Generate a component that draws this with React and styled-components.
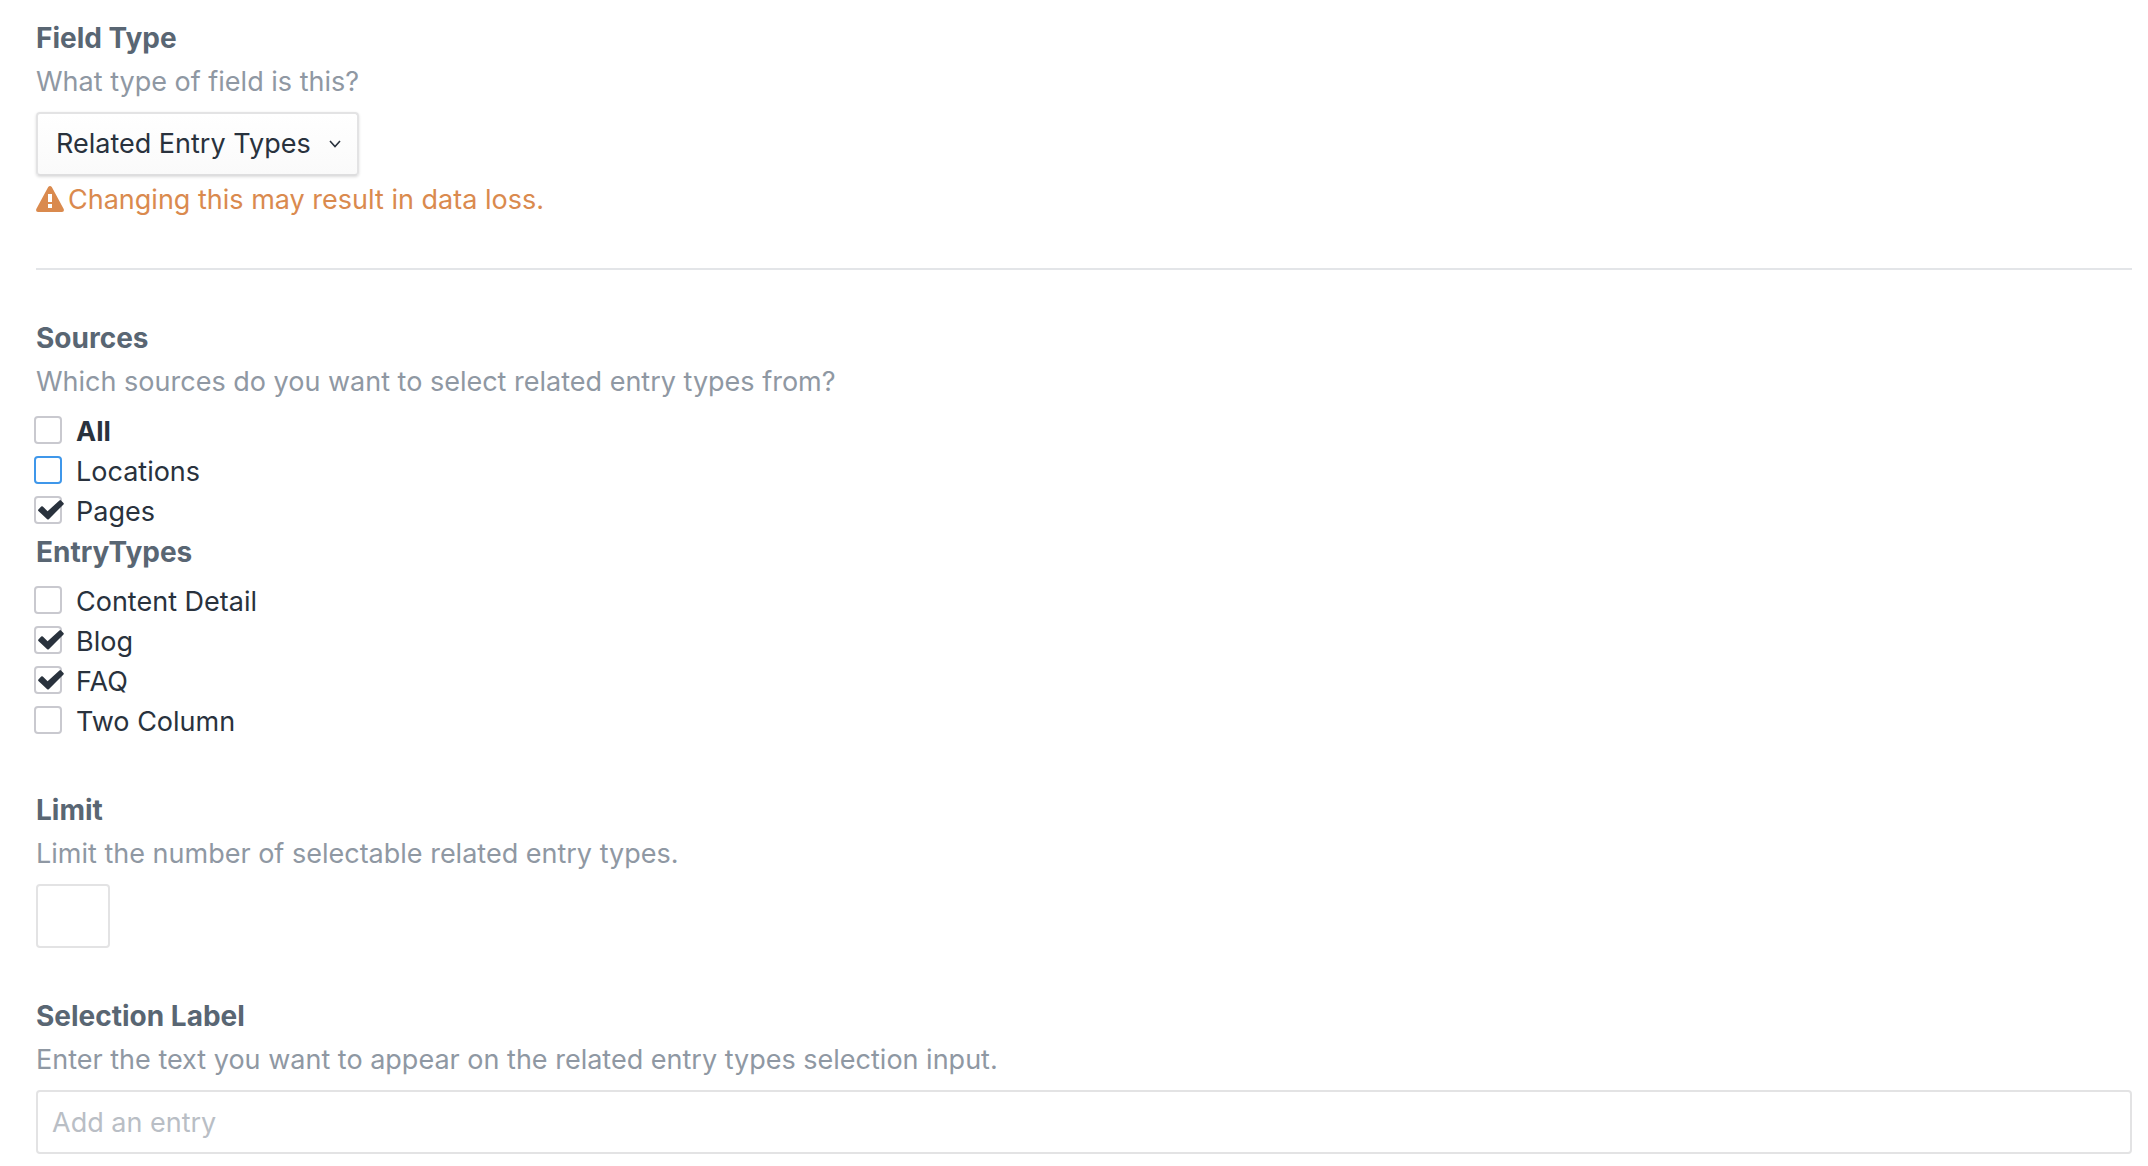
import React, { useState } from 'react';
import styled, { createGlobalStyle } from 'styled-components';

const GlobalStyle = createGlobalStyle`
  *, *::before, *::after { box-sizing: border-box; }
  body {
    margin: 0;
    background: #fff;
    color: #29323d;
    font-family: Inter, "Liberation Sans", sans-serif;
    font-size: 27px;
    line-height: 40px;
  }
  input, select { font: inherit; color: inherit; margin: 0; }
`;

const Form = styled.form`
  display: flex;
  flex-direction: column;
  gap: 48px;
  padding: 18px 16px 12px 36px;
`;

const Field = styled.div`
  display: flex;
  flex-direction: column;
  align-items: flex-start;
`;

const CheckGroup = styled.fieldset`
  display: flex;
  flex-direction: column;
  align-items: flex-start;
  min-width: 0;
  margin: 0;
  padding: 0;
  border: 0;
`;

const Heading = styled.label`
  font-size: 28px;
  font-weight: 700;
  color: #596673;
`;

const Legend = styled.legend`
  padding: 0;
  font-size: 28px;
  font-weight: 700;
  color: #596673;
`;

const Hint = styled.p`
  margin: 4px 0 10px;
  color: #8f98a3;
`;

const SelectBox = styled.div`
  position: relative;
  color: #29323d;
`;

const Select = styled.select`
  appearance: none;
  display: block;
  height: 64px;
  padding: 0 46px 0 18px;
  border: 2px solid #e3e3e4;
  border-bottom-color: #dededf;
  border-radius: 4px;
  background: linear-gradient(#fff, #fafafa);
  box-shadow: 0 1px 3px rgba(0, 0, 0, 0.14);
`;

const Chevron = styled.svg`
  position: absolute;
  top: 28px;
  right: 18px;
  pointer-events: none;
`;

const Warning = styled.p`
  display: flex;
  align-items: center;
  gap: 4px;
  margin: 4px 0 0;
  color: #da8a4e;
`;

const Divider = styled.hr`
  width: 100%;
  height: 2px;
  margin: 0;
  border: 0;
  background: #e3e5e8;
`;

const CheckList = styled.div`
  display: flex;
  flex-direction: column;
  margin-left: -2px;
`;

const CheckRow = styled.label`
  display: flex;
  gap: 14px;
  font-weight: ${(p) => (p.$strong ? 700 : 400)};
`;

const CheckBox = styled.span`
  display: grid;
  width: 28px;
  height: 28px;
  margin-top: 4px;

  > * { grid-area: 1 / 1; }
`;

const Check = styled.input`
  appearance: none;
  width: 28px;
  height: 28px;
  border: 2px solid ${(p) => (p.$active ? '#3f97ea' : '#c9c9cf')};
  border-radius: 4px;
  background: #fff;
  outline: none;
`;

const Tick = styled.svg`
  overflow: visible;
  pointer-events: none;
`;

const TextInput = styled.input`
  width: ${(p) => (p.$short ? '74px' : '100%')};
  height: 64px;
  padding: 0 14px;
  border: 2px solid #e3e3e4;
  border-radius: 4px;
  background: #fff;

  &::placeholder { color: #b9bec5; opacity: 1; }
`;

const SubGroup = styled(CheckGroup)`
  & > legend { margin-bottom: 10px; }
`;

function Option({ label, strong, active, checked: initial = false }) {
  const [checked, setChecked] = useState(initial);
  return (
    <CheckRow $strong={strong}>
      <CheckBox>
        <Check
          type="checkbox"
          $active={active}
          checked={checked}
          onChange={(e) => setChecked(e.target.checked)}
        />
        {checked && (
          <Tick width="28" height="28" viewBox="0 0 28 28" aria-hidden="true">
            <path d="M4.4 13.4 7.2 10.6Q8 9.9 8.8 10.6L13.6 15.2 25.4 4.4Q26.2 3.7 27 4.4L29.5 6.9Q30.2 7.7 29.5 8.4L14.8 23.2Q14 24 13.2 23.2L4.4 14.9Q3.7 14.1 4.4 13.4Z" fill="#29323d" />
          </Tick>
        )}
      </CheckBox>
      {label}
    </CheckRow>
  );
}

export default function App() {
  return (
    <>
      <GlobalStyle />
      <Form>
        <Field>
          <Heading htmlFor="type">Field Type</Heading>
          <Hint>What type of field is this?</Hint>
          <SelectBox>
            <Select id="type">
              <option>Related Entry Types</option>
            </Select>
            <Chevron width="12" height="8" viewBox="0 0 12 8" aria-hidden="true">
              <path d="M1 1 6 6.5 11 1" fill="none" stroke="currentColor" strokeWidth="1.6" />
            </Chevron>
          </SelectBox>
          <Warning>
            <svg width="28" height="28" viewBox="0 0 28 28" aria-hidden="true">
              <path fillRule="evenodd" fill="currentColor" d="M12.2 1Q14-1 15.8 1L27.7 23Q28.6 26 26 26H2Q-.6 26 .3 23ZM12 8V16H16V8ZM12 18V22H16V18Z" />
            </svg>
            Changing this may result in data loss.
          </Warning>
        </Field>

        <Divider />

        <div>
          <CheckGroup>
            <Legend>Sources</Legend>
            <Hint>Which sources do you want to select related entry types from?</Hint>
            <CheckList>
              <Option label="All" strong />
              <Option label="Locations" active />
              <Option label="Pages" checked />
            </CheckList>
          </CheckGroup>
          <SubGroup>
            <Legend>EntryTypes</Legend>
            <CheckList>
              <Option label="Content Detail" />
              <Option label="Blog" checked />
              <Option label="FAQ" checked />
              <Option label="Two Column" />
            </CheckList>
          </SubGroup>
        </div>

        <Field>
          <Heading htmlFor="limit">Limit</Heading>
          <Hint>Limit the number of selectable related entry types.</Hint>
          <TextInput id="limit" type="text" $short />
        </Field>

        <Field>
          <Heading htmlFor="selection-label">Selection Label</Heading>
          <Hint>Enter the text you want to appear on the related entry types selection input.</Hint>
          <TextInput id="selection-label" type="text" placeholder="Add an entry" />
        </Field>
      </Form>
    </>
  );
}
